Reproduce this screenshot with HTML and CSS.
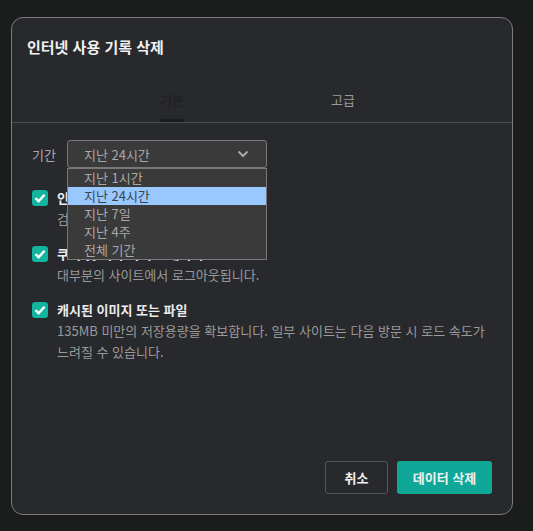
FILE: index.html
```html
<!DOCTYPE html>
<html lang="ko">
<head>
  <meta charset="UTF-8">
  <title>인터넷 사용 기록 삭제</title>
  <link rel="stylesheet" href="styles.css">
</head>
<body>
<div class="dialog">
  <h2 class="title">인터넷 사용 기록 삭제</h2>

  <div class="tabs">
    <div class="tab active">기본</div>
    <div class="tab">고급</div>
  </div>

  <div class="content">
    <div class="range-row">
      <span class="range-label">기간</span>
      <div class="select-wrap">
        <div class="select">
          <span>지난 24시간</span>
          <svg class="chevron" width="12" height="8" viewBox="0 0 12 8">
            <path d="M1.5 1.5 L6 6 L10.5 1.5" fill="none" stroke="#a8a8a8" stroke-width="2"/>
          </svg>
        </div>
        <ul class="options">
          <li>지난 1시간</li>
          <li class="selected">지난 24시간</li>
          <li>지난 7일</li>
          <li>지난 4주</li>
          <li>전체 기간</li>
        </ul>
      </div>
    </div>

    <div class="item">
      <span class="check"><svg width="16" height="16" viewBox="0 0 16 16"><path d="M3.5 8.2 L6.6 11.2 L12.5 4.8" fill="none" stroke="#fff" stroke-width="2.4"/></svg></span>
      <div class="item-text">
        <div class="item-title">인터넷 사용 기록</div>
        <div class="item-desc">검색창에서 기록 및 자동 완성 삭제</div>
      </div>
    </div>

    <div class="item">
      <span class="check"><svg width="16" height="16" viewBox="0 0 16 16"><path d="M3.5 8.2 L6.6 11.2 L12.5 4.8" fill="none" stroke="#fff" stroke-width="2.4"/></svg></span>
      <div class="item-text">
        <div class="item-title">쿠키 및 기타 사이트 데이터</div>
        <div class="item-desc">대부분의 사이트에서 로그아웃됩니다.</div>
      </div>
    </div>

    <div class="item">
      <span class="check"><svg width="16" height="16" viewBox="0 0 16 16"><path d="M3.5 8.2 L6.6 11.2 L12.5 4.8" fill="none" stroke="#fff" stroke-width="2.4"/></svg></span>
      <div class="item-text">
        <div class="item-title">캐시된 이미지 또는 파일</div>
        <div class="item-desc">135MB 미만의 저장용량을 확보합니다. 일부 사이트는 다음 방문 시 로드 속도가 느려질 수 있습니다.</div>
      </div>
    </div>
  </div>

  <div class="footer">
    <button class="btn cancel">취소</button>
    <button class="btn primary">데이터 삭제</button>
  </div>
</div>
</body>
</html>
```

FILE: styles.css
```css
body {
  margin: 0;
  padding: 17px 0 0 11px;
  background: #1b1c1c;
  font-family: "Noto Sans CJK KR", "Noto Sans", sans-serif;
  font-size: 13px;
}

.dialog {
  box-sizing: border-box;
  width: 502px;
  height: 498px;
  background: #28292d;
  border: 1px solid #7c7c7c;
  border-radius: 12px;
  display: flex;
  flex-direction: column;
}

.title {
  margin: 0;
  padding: 19px 15px 0;
  color: #f0f0f0;
  font-size: 15px;
  font-weight: bold;
  line-height: 20px;
}

.tabs {
  display: flex;
  justify-content: center;
  padding-right: 9px;
  margin-top: 33px;
  border-bottom: 1px solid #4b4c4e;
}

.tab {
  width: 171px;
  text-align: center;
  color: #9a9a9a;
  font-size: 13px;
  line-height: 20px;
  padding-bottom: 12px;
}

.tab.active {
  color: #1e1f21;
  position: relative;
}

.tab.active::after {
  content: "";
  position: absolute;
  left: 73px;
  width: 24px;
  bottom: 0;
  height: 3px;
  background: #1b1c1d;
}

.content {
  padding: 17px 20px 0;
}

.range-row {
  display: flex;
  align-items: center;
  gap: 11px;
}

.range-label {
  color: #a8a8a8;
}

.select-wrap {
  position: relative;
}

.select {
  box-sizing: border-box;
  width: 200px;
  height: 28px;
  background: #3a3a3a;
  border: 1px solid #787878;
  border-radius: 3px;
  display: flex;
  align-items: center;
  justify-content: space-between;
  padding: 0 17px 0 16px;
  color: #a8a8a8;
}

.options {
  position: absolute;
  left: 0;
  top: 28px;
  box-sizing: border-box;
  width: 200px;
  margin: 0;
  padding: 0;
  list-style: none;
  background: #3a3a3a;
  border: 1px solid #787878;
  z-index: 2;
}

.options li {
  height: 18px;
  line-height: 18px;
  padding-left: 16px;
  color: #a8a8a8;
}

.options li.selected {
  background: #99c8ff;
  color: #3b4350;
}

.item {
  display: flex;
  gap: 9px;
  margin-top: 14px;
  line-height: 21px;
}

.range-row + .item {
  margin-top: 19px;
}

.check {
  width: 16px;
  height: 16px;
  margin-top: 3px;
  flex-shrink: 0;
  background: #11b49f;
  border-radius: 3px;
  display: flex;
}

.item-title {
  color: #ececec;
  font-weight: bold;
}

.item-desc {
  color: #9a9a9a;
}

.footer {
  margin-top: auto;
  display: flex;
  justify-content: flex-end;
  gap: 9px;
  padding: 0 20px 20px;
}

.btn {
  height: 33px;
  border-radius: 3px;
  font-family: inherit;
  font-size: 13px;
  font-weight: bold;
  color: #f0f0f0;
}

.cancel {
  width: 63px;
  background: transparent;
  border: 1px solid #555659;
}

.primary {
  width: 95px;
  background: #0fa898;
  border: none;
}
```
